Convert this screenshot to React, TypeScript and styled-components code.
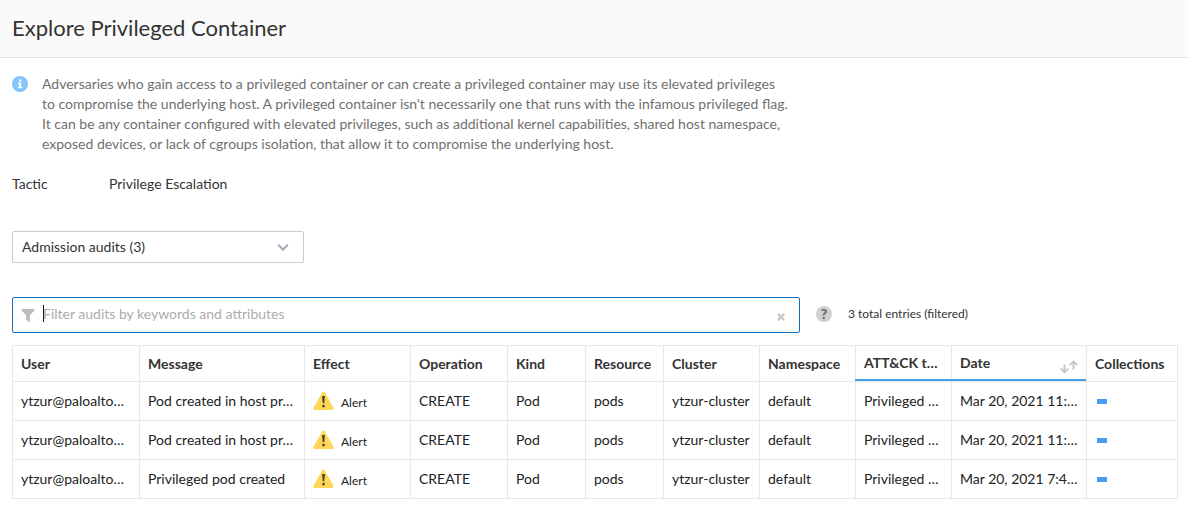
import React from 'react';
import styled, { createGlobalStyle, css } from 'styled-components';

const GlobalStyle = createGlobalStyle`
  * { box-sizing: border-box; }
  body {
    margin: 0;
    background: #fff;
    color: #333;
    font-family: Lato, "Liberation Sans", sans-serif;
    font-size: 14px;
    line-height: 20px;
  }
`;

const Header = styled.header`
  height: 58px;
  padding: 13px 12px 0;
  background: #fafafa;
  border-bottom: 1px solid #e1e1e1;
`;

const Title = styled.h1`
  margin: 0;
  font-size: 22px;
  line-height: 30px;
  font-weight: 400;
`;

const Content = styled.main`
  padding: 16px 10px 0 12px;
`;

const Info = styled.section`
  display: flex;
  gap: 14px;
  color: #707070;
`;

const InfoIcon = styled.svg`
  flex: none;
  margin-top: 2px;
`;

const Description = styled.p`
  margin: 0;
  white-space: nowrap;
`;

const Details = styled.dl`
  display: grid;
  grid-template-columns: 97px auto;
  margin: 20px 0 0;
`;

const Term = styled.dt``;

const Value = styled.dd`
  margin: 0;
`;

const Select = styled.button`
  display: flex;
  align-items: center;
  justify-content: space-between;
  width: 292px;
  height: 32px;
  margin-top: 37px;
  padding: 0 14px 0 9px;
  border: 1px solid #ccc;
  border-radius: 2px;
  background: #fff;
  color: inherit;
  font: inherit;
`;

const FilterBar = styled.div`
  display: flex;
  align-items: center;
  height: 36px;
  margin-top: 34px;
`;

const FilterField = styled.div`
  display: flex;
  align-items: center;
  width: 788px;
  height: 36px;
  padding: 0 14px 2px 8px;
  border: 1px solid #1270c4;
  border-radius: 2px;
`;

const FunnelIcon = styled.svg`
  margin: 3px 8px 0 0;
`;

const Caret = styled.span`
  width: 1px;
  height: 17px;
  margin: -2px -1px 0 0;
  background: #111;
`;

const Placeholder = styled.span`
  flex: 1;
  color: #acacac;
`;

const ClearIcon = styled.svg`
  margin-top: 5px;
`;

const HelpBadge = styled.span`
  width: 16px;
  height: 16px;
  margin: 0 16px;
  border-radius: 50%;
  background: #d0d0d0;
  color: #666;
  font-size: 14px;
  font-weight: 900;
  line-height: 16px;
  text-align: center;
  transform: translateY(-1px);
`;

const Count = styled.span`
  font-size: 12px;
  line-height: 20px;
  padding-bottom: 2px;
`;

const Table = styled.div`
  width: 1166px;
  margin-top: 12px;
  border: 1px solid #e8e8e8;
  border-right: 0;
  border-bottom: 0;
`;

const Row = styled.div`
  display: grid;
  grid-template-columns: 127px 165px 106px 97px 78px 78px 96px 96px 96px 135px 91px;
`;

const HeadCell = styled.div<{ $active?: boolean }>`
  display: flex;
  align-items: center;
  justify-content: space-between;
  height: 36px;
  padding: 0 8px;
  border-right: 1px solid #e8e8e8;
  border-bottom: 1px solid #e8e8e8;
  font-weight: 700;
  white-space: nowrap;
  ${(p) =>
    p.$active &&
    css`
      position: relative;
      padding-bottom: 2px;
      &::after {
        content: '';
        position: absolute;
        left: -1px;
        right: 0;
        bottom: 0;
        height: 2px;
        background: #45a2ea;
      }
    `}
`;

const SortIcon = styled.svg`
  margin-top: 9px;
`;

const Cell = styled.div`
  display: flex;
  align-items: center;
  height: 39px;
  padding: 0 0 0 8px;
  border-right: 1px solid #e8e8e8;
  border-bottom: 1px solid #e8e8e8;
  white-space: nowrap;
  color: #222;
`;

const Effect = styled.span`
  display: flex;
  align-items: center;
  gap: 7px;
  font-size: 12px;
`;

const EffectLabel = styled.span`
  padding-top: 3px;
`;

const CollectionTag = styled.span`
  width: 10px;
  height: 5px;
  margin-left: 2px;
  background: #459ff0;
`;

const columns = ['User', 'Message', 'Effect', 'Operation', 'Kind', 'Resource', 'Cluster', 'Namespace', 'ATT&CK t…', 'Date', 'Collections'];

const audits = [
  { message: 'Pod created in host pr…', date: 'Mar 20, 2021 11:…' },
  { message: 'Pod created in host pr…', date: 'Mar 20, 2021 11:…' },
  { message: 'Privileged pod created', date: 'Mar 20, 2021 7:4…' },
];

const AlertIcon = () => (
  <svg width="21" height="20" viewBox="0 0 21 20">
    <path d="M10.5 1.9 L19.3 17.5 H1.7 Z" fill="#ffd656" stroke="#ffd656" strokeWidth="2.8" strokeLinejoin="round" />
    <path d="M9.1 5.1h2.8l-.7 7.2H9.8z" fill="#3d3d33" />
    <circle cx="10.5" cy="15.1" r="1.3" fill="#3d3d33" />
  </svg>
);

export default function App() {
  return (
    <>
      <GlobalStyle />
      <Header>
        <Title>Explore Privileged Container</Title>
      </Header>
      <Content>
        <Info>
          <InfoIcon width="16" height="16" viewBox="0 0 16 16">
            <circle cx="8" cy="8" r="8" fill="#84c5fb" />
            <path d="M6.9 3.6h2.3v2H6.9zM6.1 6.6h3.1v4.2h.9v1.5h-4v-1.5H7V8.1h-.9z" fill="#fff" />
          </InfoIcon>
          <Description>
            Adversaries who gain access to a privileged container or can create a privileged container may use its elevated privileges
            <br />
            to compromise the underlying host. A privileged container isn't necessarily one that runs with the infamous privileged flag.
            <br />
            It can be any container configured with elevated privileges, such as additional kernel capabilities, shared host namespace,
            <br />
            exposed devices, or lack of cgroups isolation, that allow it to compromise the underlying host.
          </Description>
        </Info>
        <Details>
          <Term>Tactic</Term>
          <Value>Privilege Escalation</Value>
        </Details>
        <Select>
          Admission audits (3)
          <svg width="12" height="8" viewBox="0 0 12 8">
            <path d="M1.2 1.7 6 6.5l4.8-4.8" fill="none" stroke="#9eabb8" strokeWidth="2" />
          </svg>
        </Select>
        <FilterBar>
          <FilterField>
            <FunnelIcon width="14" height="14" viewBox="0 0 14 14">
              <path d="M.3 0h13.4v1L8.9 6.4V13.6L5.1 10.8V6.4L.3 1z" fill="#bdbdbd" />
            </FunnelIcon>
            <Caret />
            <Placeholder>Filter audits by keywords and attributes</Placeholder>
            <ClearIcon width="8" height="8" viewBox="0 0 8 8">
              <path d="M.8.8l6.4 6.4M7.2.8L.8 7.2" stroke="#c4c4c4" strokeWidth="2.2" />
            </ClearIcon>
          </FilterField>
          <HelpBadge>?</HelpBadge>
          <Count>3 total entries (filtered)</Count>
        </FilterBar>
        <Table>
          <Row>
            {columns.map((name, i) => (
              <HeadCell key={name} $active={i === 8 || i === 9}>
                {name}
                {name === 'Date' && (
                  <SortIcon width="18" height="14" viewBox="0 0 18 14">
                    <path d="M4.5 4.5v8M.8 8.6l3.7 3.7 3.7-3.7M13.5 9.5v-8M9.8 5.2l3.7-3.7 3.7 3.7" fill="none" stroke="#c6c6c6" strokeWidth="1.9" />
                  </SortIcon>
                )}
              </HeadCell>
            ))}
          </Row>
          {audits.map((audit, i) => (
            <Row key={i}>
              <Cell>ytzur@paloalto…</Cell>
              <Cell>{audit.message}</Cell>
              <Cell>
                <Effect>
                  <AlertIcon />
                  <EffectLabel>Alert</EffectLabel>
                </Effect>
              </Cell>
              <Cell>CREATE</Cell>
              <Cell>Pod</Cell>
              <Cell>pods</Cell>
              <Cell>ytzur-cluster</Cell>
              <Cell>default</Cell>
              <Cell>Privileged …</Cell>
              <Cell>{audit.date}</Cell>
              <Cell>
                <CollectionTag />
              </Cell>
            </Row>
          ))}
        </Table>
      </Content>
    </>
  );
}
